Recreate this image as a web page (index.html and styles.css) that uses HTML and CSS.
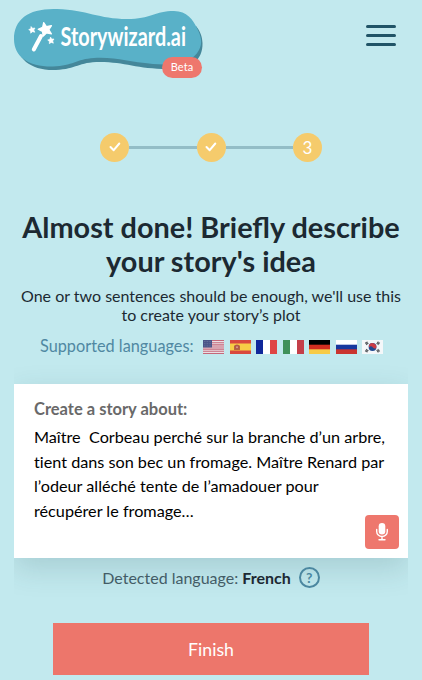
FILE: index.html
```html
<!DOCTYPE html>
<html lang="en">
<head>
<meta charset="utf-8">
<title>Storywizard.ai</title>
<link rel="stylesheet" href="styles.css">
</head>
<body>
<header class="header">
  <div class="logo">
    <svg class="logo-art" width="190" height="66" viewBox="13 6 190 66">
      <path fill="#44879a" d="M15 40C17 59 31 71 56 70C77 69 78 62 100 62C125 62 137 69 168 69C190 69 203 61 202.500 43C202 34 199 30 196 26L30 24Z"/>
      <path fill="#59b1c8" d="M14 39C14 19 29 8 57 9C87 10 99 19 127 19C151 19 155 11 174 11C187 11 193 20 197 28C201 36 203 43 199 50C193 62 177 66 153 64C128 62 118 57 94 58C76 59 73 66 53 66.500C29 67 14 57 14 39Z"/>
      <g fill="#fff" stroke="#fff" stroke-linejoin="round">
        <path d="M33.800 49.500L41 36" stroke-width="4" stroke-linecap="round"/>
        <path stroke-width="1.200" d="M43.700 22.500L46.400 26.600L51.500 25.600L48.900 29.700L51.400 33.900L46.600 32.900L43.100 36.200L42.500 31.500L38.200 29.300L42.600 27.300Z"/>
        <path stroke-width=".6" d="M31 26.500L32.600 28.300L35 28L33.800 30L34.900 32.200L32.500 31.700L30.700 33.200L30.600 30.900L28.700 29.600L30.800 28.700Z"/>
        <path stroke-width=".6" d="M50.500 37L51.700 39L54 39L52.700 40.900L53.400 43.200L51.200 42.400L49.300 43.700L49.400 41.400L47.700 40L49.900 39.300Z"/>
      </g>
      <text class="logo-name" x="60.500" y="46" textLength="125.500" lengthAdjust="spacingAndGlyphs">Storywizard.ai</text>
    </svg>
    <span class="beta">Beta</span>
  </div>
  <div class="menu"><span></span><span></span><span></span></div>
</header>

<div class="steps">
  <span class="step"><svg width="12" height="10" viewBox="0 0 12 10"><path class="check" d="M1.500 5L4.700 8.200L10.300 1.500"/></svg></span>
  <span class="line"></span>
  <span class="step"><svg width="12" height="10" viewBox="0 0 12 10"><path class="check" d="M1.500 5L4.700 8.200L10.300 1.500"/></svg></span>
  <span class="line"></span>
  <span class="step">3</span>
</div>

<h1 class="title">Almost done! Briefly describe<br>your story's idea</h1>
<p class="subtitle">One or two sentences should be enough, we'll use this<br>to create your story’s plot</p>

<div class="languages">
  <span class="languages-label">Supported languages:</span>
  <div class="flags">
    <svg class="flag" viewBox="0 0 21 14"><path fill="#eadfe4" d="M0 0H21V14H0Z"/><path stroke="#c5687a" stroke-width="1.080" d="M0 .54H21M0 2.690H21M0 4.850H21M0 7H21M0 9.150H21M0 11.300H21M0 13.460H21"/><path fill="#4a5488" d="M0 0H9V7.500H0Z"/><path stroke="#8088aa" stroke-width=".6" stroke-dasharray=".8 .8" d="M1 1.500H8M1 3.700H8M1 5.900H8"/></svg>
    <svg class="flag" viewBox="0 0 21 14"><path fill="#d9483e" d="M0 0H21V14H0Z"/><path fill="#f7cd46" d="M0 3.500H21V10.500H0Z"/><path fill="#b66a3c" d="M4 5.500H10V10H4Z"/><circle cx="7" cy="7" r="2.400" fill="#b45848"/><circle cx="7" cy="7.300" r="1" fill="#d8a087"/></svg>
    <svg class="flag" viewBox="0 0 21 14"><path fill="#fff" d="M0 0H21V14H0Z"/><path fill="#10289a" d="M0 0H7V14H0Z"/><path fill="#df4544" d="M14 0H21V14H14Z"/></svg>
    <svg class="flag" viewBox="0 0 21 14"><path fill="#fff" d="M0 0H21V14H0Z"/><path fill="#40915a" d="M0 0H7V14H0Z"/><path fill="#c43f49" d="M14 0H21V14H14Z"/></svg>
    <svg class="flag" viewBox="0 0 21 14"><path fill="#f7cb46" d="M0 0H21V14H0Z"/><path fill="#d32e20" d="M0 0H21V9.300H0Z"/><path fill="#000" d="M0 0H21V4.700H0Z"/></svg>
    <svg class="flag" viewBox="0 0 21 14"><path fill="#ca342f" d="M0 0H21V14H0Z"/><path fill="#17389e" d="M0 0H21V9.300H0Z"/><path fill="#fff" d="M0 0H21V4.700H0Z"/></svg>
    <svg class="flag" viewBox="0 0 21 14"><path fill="#f4f7f9" d="M0 0H21V14H0Z"/><circle cx="10.500" cy="7" r="3.900" fill="#214a91"/><path fill="#cc3c46" d="M7 5.200A3.900 3.900 0 0 1 14.100 8.400C12.700 9 11.600 8.200 10.500 7C9.400 5.800 8 6 7 7.400Z"/><path stroke="#474c50" stroke-width="3" stroke-dasharray=".9 .2" d="M3.700 4L5.900 2.500M15.100 2.500L17.300 4M3.700 10L5.900 11.500M15.100 11.500L17.300 10"/></svg>
  </div>
</div>

<main class="card-wrap">
  <section class="card">
    <h2 class="card-label">Create a story about:</h2>
    <p class="story">Maître&nbsp; Corbeau perché sur la branche d’un arbre,<br>tient dans son bec un fromage. Maître Renard par<br>l’odeur alléché tente de l’amadouer pour<br>récupérer le fromage…</p>
    <button class="mic" aria-label="Dictate"><svg width="14" height="20" viewBox="0 0 14 20"><rect x="3.700" y="1" width="6.600" height="11.500" rx="3.300" fill="#fff"/><path fill="none" stroke="#fff" stroke-width="1.400" stroke-linecap="round" d="M1.700 7.500V9.500A5.300 5 0 0 0 12.300 9.500V7.500M7 14.500V17.500M4 17.700H10"/></svg></button>
  </section>
  <div class="detected"><span class="detected-text">Detected language: <b>French</b></span><span class="help">?</span></div>
</main>
<button class="finish">Finish</button>
</body>
</html>
```

FILE: styles.css
```css
* { box-sizing: border-box; }
body {
  margin: 0;
  height: 680px;
  background: #c2e9ee;
  font-family: Lato, sans-serif;
  color: #1c2932;
}
h1, h2, p { margin: 0; font-size: inherit; }
button { border: 0; padding: 0; font: inherit; }
svg { display: block; }
.header {
  display: flex;
  justify-content: space-between;
  height: 133px;
  padding: 6px 26px 0 13px;
}
.logo { position: relative; width: 190px; height: 72px; }
.logo-art { overflow: visible; }
.logo-name { font: 700 26.500px Lato, sans-serif; fill: #fff; }
.beta {
  position: absolute;
  left: 149px;
  top: 51px;
  width: 40px;
  height: 21px;
  border-radius: 11px;
  background: #ee776d;
  color: #fff;
  font-size: 11px;
  line-height: 20px;
  letter-spacing: .1px;
  text-align: center;
}
.menu { display: flex; flex-direction: column; gap: 6px; padding-top: 19px; }
.menu span { width: 30px; height: 3px; border-radius: 2px; background: #205467; }
.steps { display: flex; align-items: center; justify-content: center; height: 29px; }
.step {
  display: flex;
  align-items: center;
  justify-content: center;
  width: 29px;
  height: 29px;
  border-radius: 50%;
  background: #f5cb6c;
  color: #fff;
  font-size: 17px;
  line-height: 27px;
  padding-bottom: 1px;
}
.check { fill: none; stroke: #fff; stroke-width: 2; stroke-linecap: round; stroke-linejoin: round; }
.line { width: 67.500px; height: 3px; background: #93bdc6; }
.title {
  margin-top: 48px;
  font-size: 28.850px;
  font-weight: 700;
  line-height: 34px;
  text-align: center;
  white-space: nowrap;
}
.subtitle {
  margin-top: 8px;
  font-size: 16px;
  line-height: 19px;
  text-align: center;
  white-space: nowrap;
}
.languages { display: flex; height: 20px; margin: 11px 0 0 40px; align-items: center; }
.languages-label { width: 163px; font-size: 16.300px; color: #5088a2; white-space: nowrap; }
.flags { display: flex; gap: 5.500px; padding-top: 3px; }
.flag { width: 21px; height: 14px; }
.card-wrap { margin: 8px 14px 0; padding-top: 21px; height: 248px; overflow: hidden; }
.card {
  position: relative;
  height: 173.500px;
  padding: 15px 20px 0;
  background: #fff;
  box-shadow: 0 10px 28px rgba(32, 70, 80, .17);
}
.card-label { font-size: 16.500px; line-height: 20px; font-weight: 700; color: #696969; }
.story {
  margin-top: 6px;
  font-size: 16.220px;
  line-height: 24.500px;
  color: #000;
  white-space: nowrap;
  font-variant-ligatures: none;
}
.mic {
  position: absolute;
  right: 9px;
  bottom: 9px;
  display: flex;
  align-items: center;
  justify-content: center;
  width: 34px;
  height: 34px;
  border-radius: 4px;
  background: #ee776d;
}
.detected {
  position: relative;
  display: flex;
  align-items: center;
  justify-content: center;
  gap: 8px;
  margin-top: 9px;
  height: 21px;
  font-size: 16px;
  color: #435c66;
  white-space: nowrap;
}
.detected b { color: #1c2932; }
.help {
  width: 21px;
  height: 21px;
  border: 2px solid #4b87a0;
  border-radius: 50%;
  color: #4b87a0;
  font-size: 14px;
  font-weight: 700;
  line-height: 17px;
  text-align: center;
}
.finish {
  display: block;
  width: 316px;
  height: 52px;
  margin: 12px 0 0 53px;
  background: #ed766b;
  color: #fff;
  font-size: 17.700px;
}
```
